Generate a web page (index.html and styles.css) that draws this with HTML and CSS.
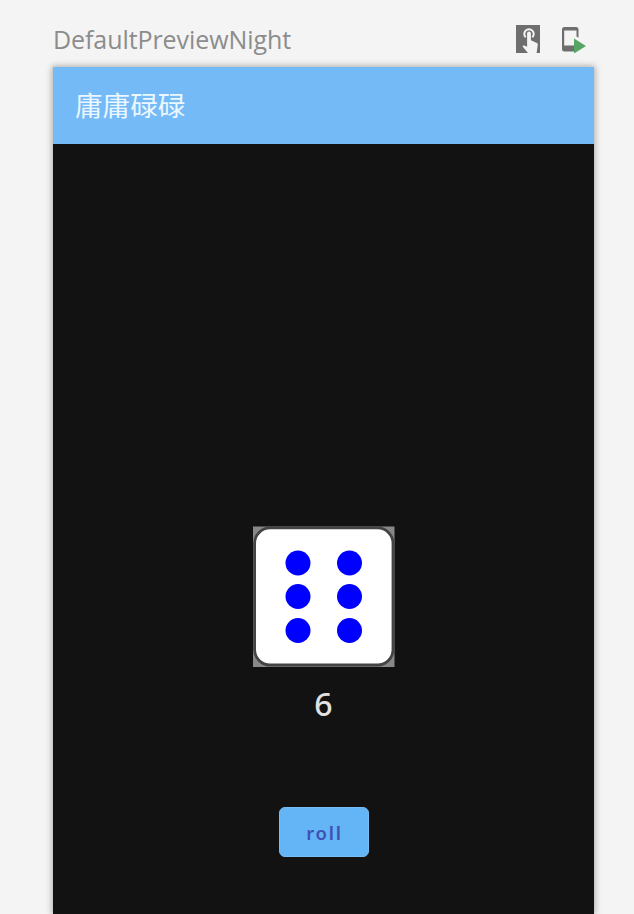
FILE: index.html
```html
<!DOCTYPE html>
<html lang="zh-CN">
<head>
<meta charset="utf-8">
<title>DefaultPreviewNight</title>
<link rel="stylesheet" href="styles.css">
</head>
<body>
<header class="preview-header">
  <span class="preview-name">DefaultPreviewNight</span>
  <div class="actions">
    <svg class="icon-touch" width="24" height="28" viewBox="0 0 24 28">
      <path fill="#6e6e6e" d="M0 0h24v28H0z"/>
      <path fill="none" stroke="#f4f4f4" stroke-width="2" d="M9.700 12.300A4.700 4.700 0 1 1 16.300 12.300"/>
      <path fill="#f4f4f4" d="M11.100 8.500a1.900 1.900 0 0 1 3.800 0v6.800l6 2.600q1.100.6.9 1.800L20.600 28h-8.700l-5.300-6.500 1-1.200 3.500 1.500z"/>
    </svg>
    <svg class="icon-run" width="25" height="28" viewBox="0 0 25 28">
      <path fill="#6e6e6e" d="M2.500 2h11.500A2.500 2.500 0 0 1 16.500 4.500v8.300l-2-1.300V5.500H2.200v15H12v6H2.500A2.500 2.500 0 0 1 0 24v-19.500A2.500 2.500 0 0 1 2.500 2z"/>
      <path fill="#55a663" d="M12 13.500v15l12-7.500z"/>
    </svg>
  </div>
</header>
<main class="device">
  <div class="app-bar"><h1>庸庸碌碌</h1></div>
  <section class="content">
    <svg class="die" width="142" height="141" viewBox="0 0 142 141">
      <path fill="#888" d="M0 .5h141.500v140.500H0z"/>
      <rect x="1.600" y="1.900" width="138.400" height="137.100" rx="15.500" fill="#fff" stroke="#444" stroke-width="2.800"/>
      <g fill="#00f">
        <circle cx="45" cy="37" r="12.500"/><circle cx="96.500" cy="37" r="12.500"/>
        <circle cx="45" cy="70.500" r="12.500"/><circle cx="96.500" cy="70.500" r="12.500"/>
        <circle cx="45" cy="104.500" r="12.500"/><circle cx="96.500" cy="104.500" r="12.500"/>
      </g>
    </svg>
    <p class="result">6</p>
    <button class="roll">roll</button>
  </section>
</main>
</body>
</html>
```
FILE: styles.css
```css
* { box-sizing: border-box; }
body {
  margin: 0;
  height: 914px;
  overflow: hidden;
  background: #f4f4f4;
  font-family: Roboto, "Noto Sans CJK SC", sans-serif;
}
.preview-header {
  display: flex;
  justify-content: space-between;
  height: 67px;
  padding: 25px 47px 0 53px;
}
.preview-name {
  color: #8c8c8c;
  font: 25px/28px "Open Sans", sans-serif;
  letter-spacing: -0.08px;
}
.actions { display: flex; gap: 22px; }
.device {
  width: 541px;
  height: 847px;
  margin-left: 53px;
  background: #121212;
  box-shadow: 0 0 6px 1px #aaa;
}
.app-bar {
  display: flex;
  align-items: center;
  height: 77px;
  padding: 2px 0 0 22px;
  background: #74baf7;
}
h1 {
  margin: 0;
  color: #eaf7ff;
  font-size: 27.6px;
  font-weight: 400;
  line-height: 40px;
}
.content {
  display: flex;
  flex-direction: column;
  align-items: center;
  padding-top: 382px;
}
.die { display: block; }
.result {
  margin: 16px 0 0;
  color: #e1e1e1;
  font: 500 32px/42px "Noto Sans", sans-serif;
}
.roll {
  width: 90px;
  height: 50px;
  margin-top: 82px;
  padding: 2px 0 0 2px;
  border: 1px solid #78bdf4;
  border-radius: 6px;
  background: #64b5f6;
  color: #3f51b5;
  font: 600 18.5px/24px "Noto Sans", sans-serif;
  letter-spacing: 1.8px;
}
```
